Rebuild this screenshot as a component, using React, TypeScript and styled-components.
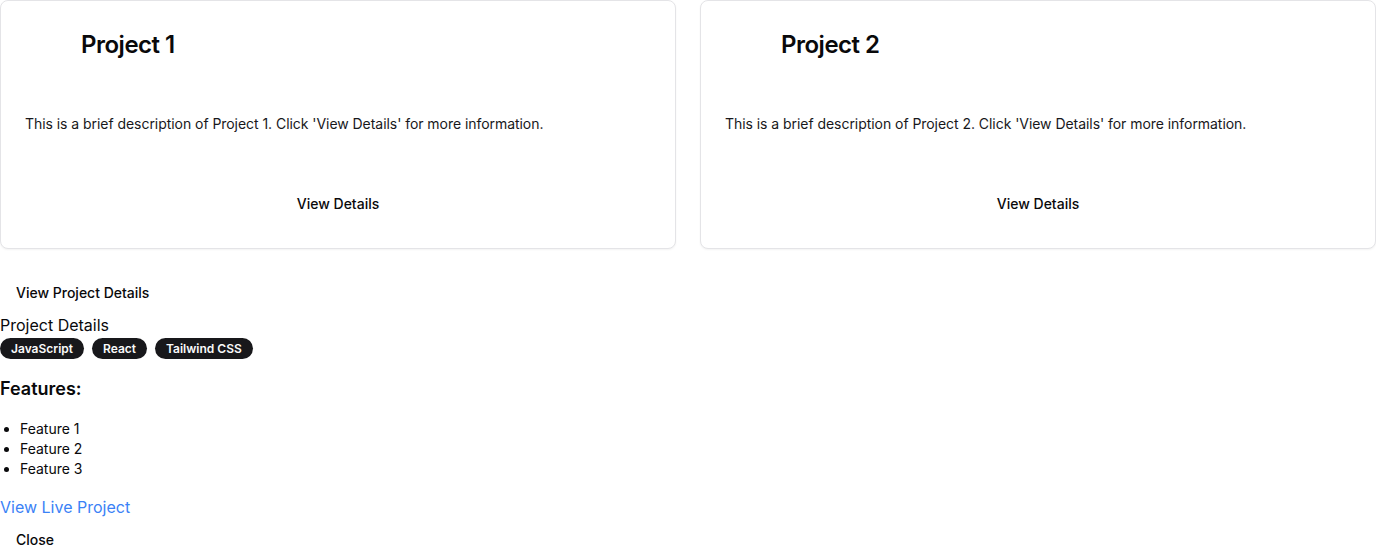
import React from "react";
import styled, { createGlobalStyle } from "styled-components";

const Global = createGlobalStyle`
  * { box-sizing: border-box; }
  body {
    margin: 0;
    font-family: Inter, "Noto Sans", sans-serif;
    color: #09090b;
    background: #ffffff;
  }
`;

const Page = styled.div`
  display: flex;
  flex-direction: column;
`;

const Grid = styled.div`
  display: grid;
  grid-template-columns: 1fr 1fr;
  gap: 24px;
`;

const Card = styled.div`
  border: 1px solid #e4e4e7;
  border-radius: 8px;
  background: #fff;
  box-shadow: 0 1px 2px rgba(0, 0, 0, 0.05);
  display: flex;
  flex-direction: column;
`;

const CardHeader = styled.div`
  display: flex;
  align-items: center;
  gap: 16px;
  padding: 24px;
`;

const Thumb = styled.div`
  width: 40px;
  height: 40px;
  flex: none;
`;

const CardTitle = styled.h2`
  margin: 0;
  font-size: 24px;
  line-height: 32px;
  font-weight: 600;
  letter-spacing: -0.5px;
`;

const CardBody = styled.div`
  padding: 25px 24px 24px;
`;

const Description = styled.p`
  margin: 0;
  font-size: 14px;
  line-height: 20px;
  letter-spacing: -0.05px;
  color: #18181b;
`;

const CardFooter = styled.div`
  display: flex;
  justify-content: center;
  padding: 25px 24px 25px;
`;

const GhostButton = styled.button`
  height: 40px;
  padding: 0 16px;
  border: none;
  background: transparent;
  font-family: inherit;
  font-size: 14px;
  font-weight: 500;
  color: #09090b;
  cursor: pointer;
  align-self: flex-start;
`;

const TriggerButton = styled(GhostButton)`
  margin-top: 23px;
`;

const DetailTitle = styled.div`
  font-size: 16px;
  line-height: 24px;
  margin-top: 1px;
`;

const Badges = styled.div`
  display: flex;
  gap: 8px;
  margin-top: 1px;
`;

const Badge = styled.span`
  display: inline-flex;
  align-items: center;
  height: 21px;
  padding: 0 11px;
  border-radius: 999px;
  background: #18181b;
  color: #fafafa;
  font-size: 12px;
  font-weight: 600;
`;

const FeaturesTitle = styled.h3`
  margin: 16px 0 0;
  font-size: 18px;
  line-height: 28px;
  font-weight: 600;
`;

const FeatureList = styled.ul`
  margin: 16px 0 0;
  padding-left: 20px;
  list-style: disc;
`;

const FeatureItem = styled.li`
  font-size: 14px;
  line-height: 20px;
`;

const LiveLink = styled.a`
  margin-top: 17px;
  font-size: 16px;
  line-height: 23px;
  color: #3b82f6;
  text-decoration: none;
  align-self: flex-start;
`;

const projects = [1, 2];
const tech = ["JavaScript", "React", "Tailwind CSS"];
const features = ["Feature 1", "Feature 2", "Feature 3"];

export default function App() {
  return (
    <>
      <Global />
      <Page>
        <Grid>
          {projects.map((n) => (
            <Card key={n}>
              <CardHeader>
                <Thumb />
                <CardTitle>Project {n}</CardTitle>
              </CardHeader>
              <CardBody>
                <Description>
                  This is a brief description of Project {n}. Click 'View Details' for more information.
                </Description>
              </CardBody>
              <CardFooter>
                <GhostButton>View Details</GhostButton>
              </CardFooter>
            </Card>
          ))}
        </Grid>
        <TriggerButton>View Project Details</TriggerButton>
        <DetailTitle>Project Details</DetailTitle>
        <Badges>
          {tech.map((t) => (
            <Badge key={t}>{t}</Badge>
          ))}
        </Badges>
        <FeaturesTitle>Features:</FeaturesTitle>
        <FeatureList>
          {features.map((f) => (
            <FeatureItem key={f}>{f}</FeatureItem>
          ))}
        </FeatureList>
        <LiveLink href="#">View Live Project</LiveLink>
        <GhostButton>Close</GhostButton>
      </Page>
    </>
  );
}
